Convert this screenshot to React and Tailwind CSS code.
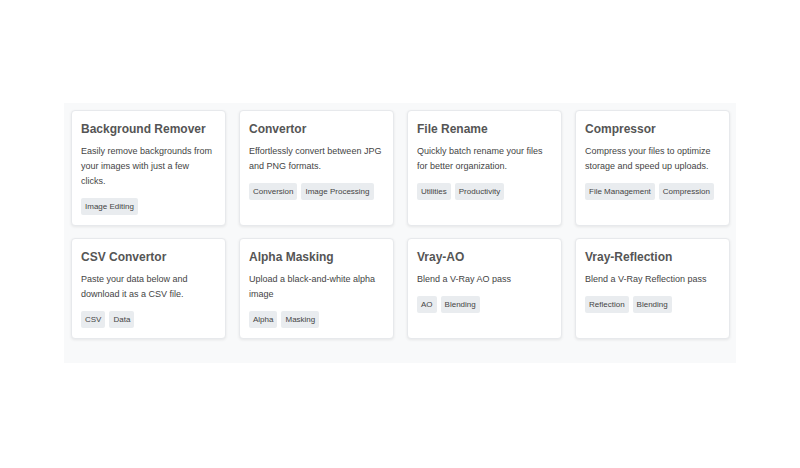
import React from 'react';

const TOOLS = [
  { title: 'Background Remover', desc: 'Easily remove backgrounds from your images with just a few clicks.', tags: ['Image Editing'] },
  { title: 'Convertor',          desc: 'Effortlessly convert between JPG and PNG formats.',                tags: ['Conversion', 'Image Processing'] },
  { title: 'File Rename',        desc: 'Quickly batch rename your files for better organization.',          tags: ['Utilities', 'Productivity'] },
  { title: 'Compressor',         desc: 'Compress your files to optimize storage and speed up uploads.',     tags: ['File Management', 'Compression'] },
  { title: 'CSV Convertor',      desc: 'Paste your data below and download it as a CSV file.',              tags: ['CSV', 'Data'] },
  { title: 'Alpha Masking',      desc: 'Upload a black-and-white alpha image',                              tags: ['Alpha', 'Masking'] },
  { title: 'Vray-AO',            desc: 'Blend a V-Ray AO pass',                                             tags: ['AO', 'Blending'] },
  { title: 'Vray-Reflection',    desc: 'Blend a V-Ray Reflection pass',                                     tags: ['Reflection', 'Blending'] },
];

function ToolCard({ title, desc, tags }) {
  return (
    <div className="bg-white border border-[#e7e9ec] rounded-[4px] shadow-[0_1px_3px_rgba(0,0,0,0.08)] pt-[10px] pb-[10px] px-[9px]">
      <h3 className="text-[12px] leading-[16px] font-bold text-[#555]">{title}</h3>
      <p className="mt-[7px] text-[9px] leading-[15px] text-[#444]">{desc}</p>
      <div className="mt-[9px] flex flex-wrap gap-[4px]">
        {tags.map(t => (
          <span key={t} className="bg-[#e9ecef] text-[#444] text-[8px] leading-[11px] py-[3px] px-[4px] rounded-[2px]">
            {t}
          </span>
        ))}
      </div>
    </div>
  );
}

export default function App() {
  return (
    <div className="min-h-screen bg-white pt-[103px] flex justify-center" style={{ fontFamily: '"Liberation Sans", Arial, sans-serif' }}>
      <div className="w-[672px] h-fit bg-[#f8f9fa] pt-[7px] pb-6 pl-[7px] pr-[6px]">
        <div className="grid grid-cols-4 gap-x-[13px] gap-y-3">
          {TOOLS.map(t => <ToolCard key={t.title} {...t} />)}
        </div>
      </div>
    </div>
  );
}
